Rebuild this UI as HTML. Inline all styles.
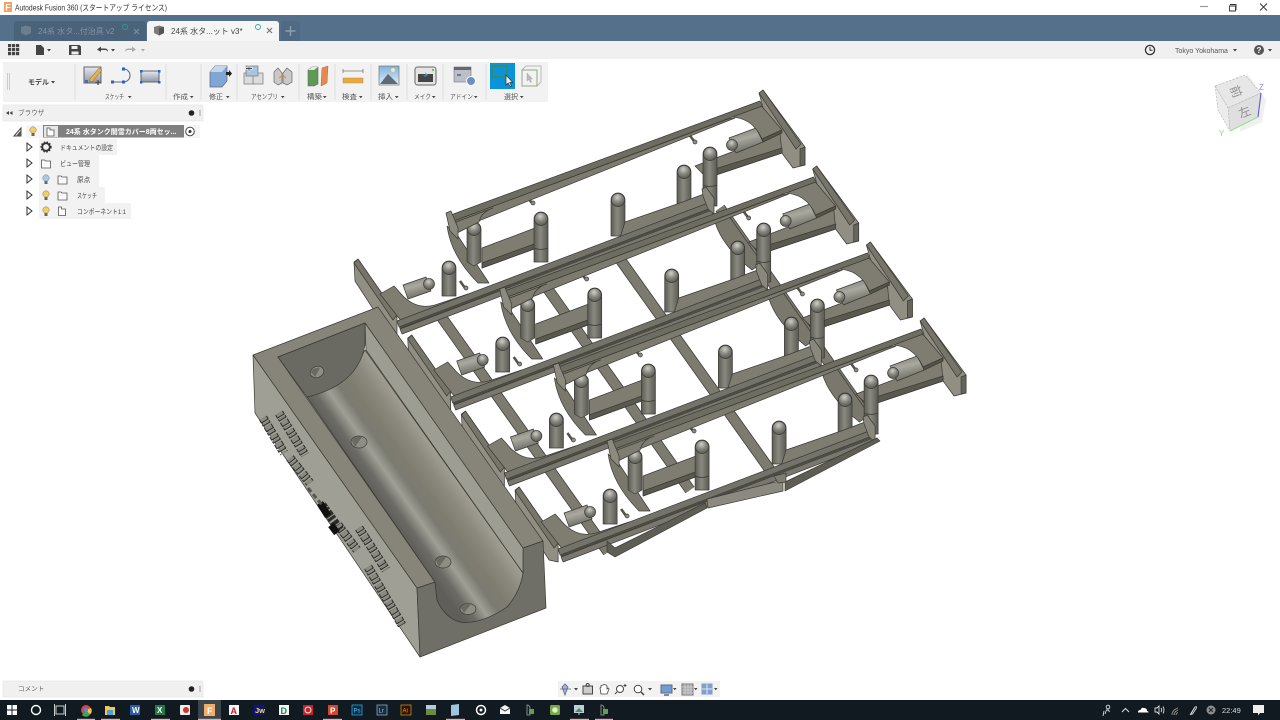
<!DOCTYPE html>
<html lang="ja"><head><meta charset="utf-8"><title>Autodesk Fusion 360</title>
<style>
html,body{margin:0;padding:0;background:#fff;width:1280px;height:720px;overflow:hidden}
svg{display:block;position:absolute;left:0;top:0;filter:blur(.3px)}
text{font-family:"Liberation Sans","Noto Sans CJK JP",sans-serif;fill:#444}
.r{font-size:6.6px;fill:#555}
.t{font-size:6.6px;fill:#444}
.e{stroke:#3b3a34;stroke-width:.7;stroke-linejoin:round}
</style></head><body>
<svg width="1280" height="720" viewBox="0 0 1280 720" xmlns="http://www.w3.org/2000/svg">
<defs>
<linearGradient id="pg" x1="0" x2="1" y1="0" y2="0"><stop offset="0" stop-color="#5c5c54"/><stop offset=".45" stop-color="#8b8a81"/><stop offset="1" stop-color="#5a5a52"/></linearGradient>
<radialGradient id="ball" cx=".45" cy=".3" r=".75"><stop offset="0" stop-color="#cfcec6"/><stop offset=".5" stop-color="#85857f"/><stop offset="1" stop-color="#53534c"/></radialGradient>
<linearGradient id="cg" x1="0" x2=".35" y1="0" y2="1"><stop offset="0" stop-color="#75746b"/><stop offset=".5" stop-color="#aaa9a0"/><stop offset="1" stop-color="#6c6c64"/></linearGradient>
<linearGradient id="tg" gradientUnits="userSpaceOnUse" x1="385" y1="510" x2="446" y2="467">
<stop offset="0" stop-color="#5f5e58"/><stop offset=".14" stop-color="#6c6b65"/><stop offset=".3" stop-color="#a09f96"/><stop offset=".45" stop-color="#7c7b72"/><stop offset=".62" stop-color="#7f7c70"/><stop offset=".82" stop-color="#8c8a7e"/><stop offset="1" stop-color="#9f9d92"/></linearGradient>
<linearGradient id="ico" x1="0" x2="0" y1="0" y2="1"><stop offset="0" stop-color="#e6e9ee"/><stop offset="1" stop-color="#8b97a6"/></linearGradient>
<linearGradient id="sky" x1="0" x2="0" y1="0" y2="1"><stop offset="0" stop-color="#7fb2dd"/><stop offset="1" stop-color="#e3eef6"/></linearGradient>

<path id="rc" class="e" fill="#7a786d" d="M715,222Q722,246 752,270L762,263L729,216Z"/>

<g id="unit">
 <!-- left curved member -->
 <path class="e" fill="#7a786d" d="M447,226Q451,256 478,283L489,283L458,236Z"/>
 <!-- right end plate -->
 <path class="e" fill="#918f84" d="M759,93L763,90L805,147V165L793,168L776,145L766,118Z"/>
 <path class="e" fill="#66655c" d="M800,149L805,147V165L800,166Z"/>
 <path class="e" fill="#77756a" d="M759,93L763,90L801,144L796,149Z"/>
 <!-- lower right bar -->
 <path class="e" fill="#7f7d71" d="M695,166L737,150L780,133L782,153L707,178Z"/>
 <path class="e" fill="#5a594f" d="M702,173L782,148V153L707,178Z"/>
 <!-- right cylinder -->
 <path class="e" fill="url(#cg)" d="M729,138L756,128L763,142L736,153Z"/>
 <circle class="e" cx="732" cy="145" r="5.5" fill="url(#ball)"/>
 <!-- lug plate right -->
 <path class="e" fill="#7f7d71" d="M727,117L759,103L782,130L762,139Q752,116 727,117Z"/>
 <path class="e" fill="#55544b" d="M762,139L782,130V133L763,142Z"/>
 <!-- left lower bar -->
 <path class="e" fill="#7f7d71" d="M482,248L535,228L537,248L482,268Z"/>
 <path class="e" fill="#5a594f" d="M482,263L537,243V248L482,268Z"/>
 <!-- nubs -->
 <path d="M527,197L532,203" stroke="#55544c" stroke-width="2.6"/><circle class="e" cx="533" cy="203" r="2" fill="#8f8e85"/>
 <path d="M688,133L694,141" stroke="#55544c" stroke-width="2.6"/><circle class="e" cx="695" cy="142" r="2" fill="#8f8e85"/>
 <path d="M460,281L465,288" stroke="#55544c" stroke-width="2.6"/><circle class="e" cx="466" cy="288" r="2" fill="#8f8e85"/>
 <!-- pins -->
 <g class="e">
 <path fill="url(#pg)" d="M467,229A7,7 0 0 1 481,229V262L474,266L467,262Z"/><circle cx="474" cy="229" r="6.6" fill="url(#ball)"/>
 <path fill="url(#pg)" d="M534,219A7,7 0 0 1 548,219V262H534Z"/><circle cx="541" cy="219" r="6.6" fill="url(#ball)"/><path d="M534,248Q541,251 548,248" fill="none"/>
 <path fill="url(#pg)" d="M611,200A7,7 0 0 1 625,200V236H611Z"/><circle cx="618" cy="200" r="6.6" fill="url(#ball)"/>
 <path fill="url(#pg)" d="M677,172A7,7 0 0 1 691,172V204H677Z"/><circle cx="684" cy="172" r="6.6" fill="url(#ball)"/>
 <path fill="url(#pg)" d="M703,154A7,7 0 0 1 717,154V206H703Z"/><circle cx="710" cy="154" r="6.6" fill="url(#ball)"/><path d="M703,185Q710,188 717,185" fill="none"/>
 </g>
 <!-- mid bar to right pins -->
 <path class="e" fill="#7f7d71" d="M625,222L680,203L704,194L706,204L640,230L620,238Z"/>
 <!-- top rail -->
 <path class="e" fill="#6e6d62" d="M448,216L760,101L762,106L451,222Z"/>
 <path class="e" fill="#7d7b70" d="M451,222L728,119L735,118L456,230Z"/>
 <!-- left top lug -->
 <path class="e" fill="#7f7d71" d="M456,222L493,208Q481,212 479,222L457,233Z"/>
 <path class="e" fill="#8d8b80" d="M446,213L451,211L458,228V239L450,231Z"/>
 <!-- lower left end plate -->
 <path class="e" fill="#918f84" d="M354,262L358,259L397,315V334L388,332L355,281Z"/>
 <path class="e" fill="#77756a" d="M358,259L397,315L393,320L354,263Z"/>
 <!-- lower left lug -->
 <path class="e" fill="#7f7d71" d="M380,294L394,286L403,296Q417,310 435,305L468,294L402,322Z"/>
 <path class="e" fill="url(#cg)" d="M403,285L426,277L431,291L408,299Z"/>
 <circle class="e" cx="429" cy="284" r="5.5" fill="url(#ball)"/>
 <path class="e" fill="url(#pg)" d="M442,268A7,7 0 0 1 456,268V296H442Z"/><circle class="e" cx="449" cy="268" r="6.6" fill="url(#ball)"/>
 <!-- lower rail -->
 <path class="e" fill="#74736a" d="M397,321L708,203L711,208L399,327Z"/>
 <path fill="#4d4c44" d="M399,327L711,208V210L400,329Z"/>
 <path class="e" fill="#7a786e" d="M400,329L712,210L713,215L402,334Z"/>
 <!-- right block -->
 <path class="e" fill="#8a887d" d="M702,189L706,187L714,198V214L708,209L703,196Z"/>
</g>
</defs>

<rect width="1280" height="720" fill="#fff"/>

<!-- transverse rails -->
<g fill="none" stroke-linecap="butt">
 <g stroke="#3f3e37" stroke-width="11"><path d="M440,315L608,552"/><path d="M545,285L690,490"/><path d="M617,255L770,470"/><path d="M720,208L873,425"/></g>
 <g stroke="#7d7b70" stroke-width="9.4"><path d="M440,315L608,552"/><path d="M545,285L690,490"/><path d="M617,255L770,470"/><path d="M720,208L873,425"/></g>
</g>
<use href="#rc"/>
<use href="#rc" x="53.7" y="76"/>
<use href="#rc" x="107.4" y="152"/>

<use href="#unit"/>
<use href="#unit" x="53.7" y="76"/>
<use href="#unit" x="107.4" y="152"/>
<use href="#unit" x="161.1" y="228"/>

<!-- bottom wedges -->
<path class="e" fill="#5f5e55" d="M615,548L705,503L707,508L615,557L607,552V541Z"/>
<path class="e" fill="#8c8a80" d="M707,499L783,480V491L708,508Z"/>
<path class="e" fill="#7f7d72" d="M774,476L786,473L786,482L778,483Z"/>
<path class="e" fill="#5f5e55" d="M785,482L877,438L880,441L785,491Z"/>

<!-- tank -->
<path class="e" fill="#a09f95" d="M253,355L417,588L420,657L255,413Z"/>
<path class="e" fill="#6f6f67" d="M417,588L435,582L437,600Q445,618 460,622Q480,625 507,607Q520,592 523,573V548L543,541L546,608L420,657Z"/>
<path class="e" fill="#87847a" d="M253,355L378,307L543,541L523,548L365,323L278,357L435,582L417,588Z"/>
<path class="e" fill="url(#tg)" d="M307,397Q345,388 365,350L523,573Q520,592 507,607Q480,625 460,622Q445,618 437,600L435,582Z"/>
<path class="e" fill="#9e9d93" d="M365,323L523,548V573L366,350Z"/>
<path class="e" fill="#6a6a62" d="M278,357L365,323V345Q358,385 307,397Z"/>
<g class="e" fill="#8f8e84"><ellipse cx="317" cy="372" rx="7" ry="5.5" transform="rotate(-20 317 372)"/><ellipse cx="359" cy="442" rx="8" ry="6"/><ellipse cx="443" cy="562" rx="8" ry="6"/><ellipse cx="468" cy="609" rx="8" ry="5.5"/></g>
<g fill="#6a6a62"><path d="M311,372a7,5 0 0 1 9,-4l-5,9z"/><path d="M352,441a7,5 0 0 1 10,-4l-7,10z"/><path d="M436,561a7,5 0 0 1 10,-4l-7,10z"/><path d="M461,608a7,5 0 0 1 10,-4l-7,9z"/></g>

<!-- embossed text on tank side -->
<g fill="none">
 <g stroke="#2c2c28" stroke-width="9" stroke-dasharray="4 1 2.500 1.500 5 1 3 2"><path d="M263,418L284,453"/><path d="M279,413L305,455"/><path d="M290,458L310,483"/><path d="M322,505L340,530"/><path d="M338,525L357,550"/><path d="M359,528L386,570"/><path d="M368,567L402,625"/></g>
 <g stroke="#8a8a83" stroke-width="7" stroke-dasharray="3 2 1.500 2.500 4 2 2 3"><path d="M263,418L284,453"/><path d="M279,413L305,455"/><path d="M290,458L310,483"/><path d="M338,525L357,550"/><path d="M359,528L386,570"/><path d="M368,567L402,625"/></g>
 <path stroke="#111110" stroke-width="7" d="M320,503L328,516M331,525L337,533"/>
 <path stroke="#555" stroke-width="3" stroke-dasharray="5 3" d="M308,488L322,505"/>
</g>

<!-- title bar -->
<rect width="1280" height="15" fill="#fff"/>
<rect x="4" y="2" width="8" height="10" fill="#f3a15a"/><text x="5.2" y="10.5" style="font-size:9px;font-weight:bold;fill:#fff">F</text>
<text x="15" y="10.5" textLength="152" lengthAdjust="spacingAndGlyphs" style="font-size:8.2px;fill:#333">Autodesk Fusion 360 (スタートアップ ライセンス)</text>
<path d="M1200,6.5H1208" stroke="#999" stroke-width="1.2"/>
<path d="M1230,4.5h6v5h-1M1229.500,6h6v5h-6z" fill="none" stroke="#333" stroke-width=".9"/>
<path d="M1260,3.500l7,7m0,-7l-7,7" stroke="#333" stroke-width=".9"/>

<!-- tabs -->
<rect y="15" width="1280" height="26" fill="#54708a"/>
<path d="M14,41V24a3,3 0 0 1 3,-3H143a3,3 0 0 1 3,3V41Z" fill="#4a6379"/>
<path d="M147,41V24a3,3 0 0 1 3,-3H276a3,3 0 0 1 3,3V41Z" fill="#f5f5f5"/>
<path d="M281,41V24a3,3 0 0 1 3,-3H297a3,3 0 0 1 3,3V41Z" fill="#4f6a82"/>
<path d="M290.500,26v10M285.500,31h10" stroke="#8ba0b3" stroke-width="1.4"/>
<path d="M21,27l5,-1.500l5,1.500v6l-5,2.500l-5,-2.500z" fill="#6b7f90"/>
<text x="38" y="34" style="font-size:8px;fill:#8295a6">24系  水タ...付治具 v2</text>
<circle cx="125" cy="27" r="2.500" fill="none" stroke="#2f9c94" stroke-width=".9"/>
<path d="M134,29l5,5m0,-5l-5,5" stroke="#7d90a2" stroke-width="1.2"/>
<path d="M154,27l5,-1.500l5,1.500v6l-5,2.500l-5,-2.500z" fill="#7c7c78"/><path d="M159,28v7.500l5,-2.500v-6z" fill="#55554f"/>
<text x="171" y="34" style="font-size:8px;fill:#444">24系  水タ...ット v3*</text>
<circle cx="258" cy="27" r="2.500" fill="none" stroke="#38a79d" stroke-width=".9"/>
<path d="M267,28l5,5m0,-5l-5,5" stroke="#777" stroke-width="1.2"/>

<!-- quick access bar -->
<rect y="41" width="1280" height="18" fill="#f0f0f0"/>
<g fill="#444"><rect x="8" y="44" width="3.200" height="3.200"/><rect x="12" y="44" width="3.200" height="3.200"/><rect x="16" y="44" width="3.200" height="3.200"/><rect x="8" y="48" width="3.200" height="3.200"/><rect x="12" y="48" width="3.200" height="3.200"/><rect x="16" y="48" width="3.200" height="3.200"/><rect x="8" y="52" width="3.200" height="3.200"/><rect x="12" y="52" width="3.200" height="3.200"/><rect x="16" y="52" width="3.200" height="3.200"/>
<path d="M36,45h5l3,3v7h-8z"/><path d="M47,49h4l-2,2.500z"/>
<path fill-rule="evenodd" d="M69,45h10.500l1.500,1.500v8.500h-12zM71.500,46v3h6v-3zM71.500,51.500v3h7v-3z"/>
<path d="M97,49.500l4,-3v2h4q3,0 3,3.500q-1,-2 -3,-2h-4v2z"/><path d="M111,49h4l-2,2.500z"/></g>
<g fill="#aaa"><path d="M136,49.500l-4,-3v2h-4q-3,0 -3,3.500q1,-2 3,-2h4v2z"/><path d="M141,49h4l-2,2.500z"/></g>
<circle cx="1150" cy="50" r="4.600" fill="none" stroke="#333" stroke-width="1.300"/><path d="M1150,47v3.200h2.500" fill="none" stroke="#333"/>
<text x="1175" y="53" style="font-size:7px;fill:#555">Tokyo Yokohama</text><path d="M1233,49h4l-2,2.500z" fill="#444"/>
<circle cx="1259" cy="50" r="5" fill="#555"/><text x="1259" y="53" style="font-size:8px;font-weight:bold;fill:#fff;text-anchor:middle">?</text><path d="M1268,49h4l-2,2.500z" fill="#444"/>

<!-- ribbon -->
<rect x="3" y="62" width="545" height="40" fill="#f2f2f2"/>
<path d="M7.500,73v17M9.500,73v17" stroke="#ccc"/>
<text x="28" y="84.500" style="font-size:7px;font-weight:bold;fill:#444">モデル</text><path d="M51,81h4l-2,2.500z" fill="#444"/>
<g stroke="#ddd" stroke-width="1"><path d="M75,64v36M166,64v36M201,64v36M237,64v36M299,64v36M335,64v36M371,64v36M407,64v36M443,64v36M486,64v36"/></g>
<!-- sketch icons -->
<rect x="84" y="67" width="17" height="16" fill="url(#ico)" stroke="#666" stroke-width="1"/><path d="M90,79l9,-11l3,2l-9,11l-3,1z" fill="#e9b04a" stroke="#8a6a20" stroke-width=".5"/><rect x="85" y="80" width="3" height="3" fill="#3a6fc4"/><path d="M98,80v5M95.500,82.500h5" stroke="#555" stroke-width="1.400"/>
<path d="M113,82H123.500A6.500,6.500 0 0 0 123.500,69" fill="none" stroke="#667" stroke-width="1.100"/><rect x="122" y="67.500" width="3" height="3" fill="#2a62c8"/><rect x="111" y="80.500" width="3" height="3" fill="#2a62c8"/><rect x="122" y="80.500" width="3" height="3" fill="#2a62c8"/>
<rect x="141" y="71" width="18" height="11" fill="url(#ico)" stroke="#666"/><g fill="#2a62c8"><rect x="140" y="70" width="2.500" height="2.500"/><rect x="158" y="70" width="2.500" height="2.500"/><rect x="140" y="81" width="2.500" height="2.500"/><rect x="158" y="81" width="2.500" height="2.500"/></g>
<!-- modify -->
<path d="M210,72l5,-6h12v15l-5,6h-12z" fill="#7fa6d6" stroke="#667" stroke-width=".7"/><path d="M215,66h12l-5,6h-12z" fill="#c5d6ea"/><path d="M226,72h3v-2l3,3.500l-3,3.500v-2h-3z" fill="#222"/>
<!-- assembly -->
<rect x="244" y="73" width="10" height="11" fill="#dcdcdc" stroke="#777" stroke-width=".7"/><rect x="253" y="73" width="10" height="11" fill="#dcdcdc" stroke="#777" stroke-width=".7"/><rect x="246" y="66" width="12" height="10" fill="#a9c3e2" stroke="#777" stroke-width=".7"/><path d="M249,65v7M245.500,68.500h7" stroke="#fff" stroke-width="2"/><path d="M249,65.500v6M246,68.500h6" stroke="#444" stroke-width=".9"/>
<path d="M274,72l4,-4l4,5v10l-4,2l-4,-3zM283,73l4,-5l5,4v10l-5,3l-4,-2z" fill="#c9c9c9" stroke="#666" stroke-width=".7"/><path d="M279,78l4,-3l3,3" stroke="#e08a28" fill="none"/>
<!-- construct -->
<path d="M308,70l4,-3h6v17l-4,2h-6z" fill="#5d9b52" stroke="#667" stroke-width=".6"/><path d="M308,70l4,-3h6l-4,3z" fill="#e6e6e6"/><path d="M322,68l6,-2l-1,17l-6,3z" fill="#e68a4e" stroke="#a65" stroke-width=".5"/>
<!-- inspect -->
<path d="M343,71h20M343,69v4M363,69v4" stroke="#777" stroke-width=".8" fill="none"/><rect x="343" y="78" width="20" height="5" fill="#e9ac3b" stroke="#a77" stroke-width=".4"/>
<!-- insert -->
<rect x="379" y="66" width="20" height="19" fill="url(#sky)" stroke="#777" stroke-width=".7"/><path d="M380,84l8,-10l10,10z" fill="#5c6b74"/><circle cx="393" cy="70" r="2" fill="#f6e9a5"/>
<!-- make -->
<rect x="415" y="67" width="21" height="18" rx="2.500" fill="#e4e4e4" stroke="#666"/><rect x="418" y="74" width="15" height="8" fill="#444"/><path d="M425.500,72v5l-2.500,-1.500h5z" fill="#5aa7dc"/><circle cx="433" cy="70" r="1" fill="#4fb04f"/>
<!-- addins -->
<rect x="454" y="67" width="17" height="15" fill="#b9c0c8" stroke="#777" stroke-width=".6"/><rect x="454" y="67" width="17" height="3" fill="#667"/><path d="M457,75h4" stroke="#333"/><circle cx="471" cy="81" r="4.500" fill="#6d8fc2" stroke="#fff"/>
<!-- select -->
<rect x="490" y="63" width="25" height="26" fill="#0a93d8"/><rect x="492" y="66" width="15" height="11" fill="none" stroke="#3f8c3d" stroke-width="1.300"/><path d="M506,75v10l2.200,-2l1.800,3.500l1.500,-.7l-1.800,-3.400h3z" fill="#eee" stroke="#222" stroke-width=".6"/>
<path d="M522,70l4,-4h15v16l-4,4h-15z" fill="#f2f2f2" stroke="#bbb"/><rect x="522" y="70" width="15" height="16" fill="none" stroke="#8fa984" stroke-width="1"/><path d="M527,73v8l2,-1.500l1.500,3l1,-.5l-1.500,-3h2.500z" fill="#bbb" stroke="#999" stroke-width=".4"/>
<!-- ribbon labels -->
<g fill="#444">
<text class="r" x="105" y="99" textLength="19" lengthAdjust="spacingAndGlyphs">スケッチ</text><path d="M128,96h3.500l-1.750,2.200z"/>
<text class="r" x="173" y="99" textLength="15" lengthAdjust="spacingAndGlyphs">作成</text><path d="M190,96h3.500l-1.750,2.200z"/>
<text class="r" x="209" y="99" textLength="14" lengthAdjust="spacingAndGlyphs">修正</text><path d="M226,96h3.500l-1.750,2.200z"/>
<text class="r" x="251" y="99" textLength="27" lengthAdjust="spacingAndGlyphs">アセンブリ</text><path d="M281,96h3.500l-1.750,2.200z"/>
<text class="r" x="307" y="99" textLength="15" lengthAdjust="spacingAndGlyphs">構築</text><path d="M323,96h3.500l-1.750,2.200z"/>
<text class="r" x="342" y="99" textLength="15" lengthAdjust="spacingAndGlyphs">検査</text><path d="M359,96h3.500l-1.750,2.200z"/>
<text class="r" x="378" y="99" textLength="15" lengthAdjust="spacingAndGlyphs">挿入</text><path d="M395,96h3.500l-1.750,2.200z"/>
<text class="r" x="414" y="99" textLength="17" lengthAdjust="spacingAndGlyphs">メイク</text><path d="M432,96h3.500l-1.750,2.200z"/>
<text class="r" x="450" y="99" textLength="23" lengthAdjust="spacingAndGlyphs">アドイン</text><path d="M474,96h3.500l-1.750,2.200z"/>
<text class="r" x="504" y="99" textLength="14" lengthAdjust="spacingAndGlyphs">選択</text><path d="M520,96h3.500l-1.750,2.200z"/>
</g>

<!-- browser -->
<rect x="3" y="105" width="200" height="16" fill="#f0f0f0" stroke="#e2e2e2" stroke-width=".6"/>
<path d="M6,113l3,-2v4zM9.500,113l3,-2v4z" fill="#444"/>
<text x="18" y="115" class="t" style="fill:#666">ブラウザ</text>
<circle cx="191.500" cy="113" r="2.800" fill="#222"/><path d="M200,110v6" stroke="#bbb" stroke-width="1.500"/>
<path d="M14,136l7,-8v8z" fill="none" stroke="#444" stroke-width="1"/><path d="M16,136l5,-6v6z" fill="#555"/>
<rect x="26" y="125" width="174" height="13" fill="#f5f5f5"/>
<rect x="43" y="125" width="141" height="12.500" fill="#808080"/>
<rect x="44" y="126" width="14" height="11" fill="#e7e7e7"/>
<path d="M47,128h3v2h4v6h-7z" fill="#fff" stroke="#555" stroke-width=".8"/>
<text x="66" y="134" style="font-size:7px;font-weight:bold;fill:#fff">24系  水タンク開雪カバー8両セッ...</text>
<circle cx="190" cy="131.500" r="4.300" fill="#fff" stroke="#333" stroke-width=".9"/><circle cx="190" cy="131.500" r="1.500" fill="#333"/>
<rect x="39" y="139" width="78" height="16" fill="#f2f2f2"/>
<rect x="39" y="155" width="60" height="16" fill="#f2f2f2"/>
<rect x="39" y="171" width="60" height="16" fill="#f2f2f2"/>
<rect x="39" y="187" width="66" height="16" fill="#f2f2f2"/>
<rect x="39" y="203" width="92" height="16" fill="#f2f2f2"/>
<g fill="#fff" stroke="#333" stroke-width="1"><path d="M27,143l5,4l-5,4z"/><path d="M27,159l5,4l-5,4z"/><path d="M27,175l5,4l-5,4z"/><path d="M27,191l5,4l-5,4z"/><path d="M27,207l5,4l-5,4z"/></g>
<!-- bulbs -->
<g stroke="#777" stroke-width=".5"><circle cx="33" cy="130" r="3.200" fill="#f2d05a"/><circle cx="46" cy="178" r="3.200" fill="#a9c8ee"/><circle cx="46" cy="194" r="3.200" fill="#f2d05a"/><circle cx="46" cy="210" r="3.200" fill="#f2d05a"/></g>
<g fill="#666"><rect x="31.500" y="133" width="3" height="3"/><rect x="44.500" y="181" width="3" height="3"/><rect x="44.500" y="197" width="3" height="3"/><rect x="44.500" y="213" width="3" height="3"/></g>
<!-- gear, folders -->
<circle cx="46" cy="147" r="3.800" fill="none" stroke="#333" stroke-width="1.800"/><circle cx="46" cy="147" r="5" fill="none" stroke="#333" stroke-width="1.300" stroke-dasharray="1.500 1.500"/>
<g fill="#fafafa" stroke="#555" stroke-width=".8"><path d="M41.500,160h3l1,1h5v7h-9z"/><path d="M58,176h3l1,1h5v7h-9z"/><path d="M58,192h3l1,1h5v7h-9z"/><path d="M58.500,207h3v2h4v6.500h-7z"/></g>
<text x="60" y="150" class="t" textLength="53" lengthAdjust="spacingAndGlyphs">ドキュメントの設定</text><text x="60" y="166" class="t" textLength="30" lengthAdjust="spacingAndGlyphs">ビュー管理</text><text x="77" y="182" class="t">原点</text><text x="77" y="198" class="t" textLength="20" lengthAdjust="spacingAndGlyphs">スケッチ</text><text x="77" y="214" class="t" textLength="49" lengthAdjust="spacingAndGlyphs">コンポーネント1:1</text>

<!-- comments -->
<rect x="3" y="681" width="200" height="16" fill="#f0f0f0" stroke="#e2e2e2" stroke-width=".6"/>
<text x="18" y="691" class="t" style="fill:#666">コメント</text><circle cx="191.500" cy="689" r="2.800" fill="#222"/><path d="M200,686v6" stroke="#bbb" stroke-width="1.500"/>

<!-- nav bar -->
<rect x="558" y="681" width="162" height="16" fill="#f2f2f2"/>
<path d="M565,684l3,3l-3,8l-3,-8zM560,689h11" fill="#9fb6d6" stroke="#667" stroke-width=".8"/><path d="M574,688h4l-2,2.500z" fill="#444"/>
<rect x="583" y="686" width="9.500" height="8" fill="#ccc" stroke="#444"/><circle cx="587.700" cy="685" r="1.500" fill="none" stroke="#444"/>
<path d="M601,694l-1,-6l1,-.5v-2l2,-.5l1,-.5l2,.5l1,1v3l1,-1l1,1l-2,5z" fill="#fff" stroke="#444" stroke-width=".8"/>
<circle cx="620" cy="689" r="3.500" fill="#fff" stroke="#444"/><path d="M617,692l-2,2M625,684v3M623.500,685.500h3" stroke="#444"/>
<circle cx="638" cy="689" r="3.800" fill="#fff" stroke="#444"/><path d="M641,692l3,3" stroke="#444" stroke-width="1.500"/><path d="M648,688h4l-2,2.500z" fill="#444"/>
<rect x="661" y="685" width="11" height="8" fill="#6e9ed6" stroke="#667"/><path d="M664,695h5" stroke="#667" stroke-width="1.500"/><path d="M673,688h3.500l-1.750,2.200z" fill="#444"/>
<rect x="682" y="684" width="11" height="11" fill="#aaa" stroke="#777"/><path d="M682,687h11M682,690h11M682,693h11M685,684v11M688,684v11M691,684v11" stroke="#ddd" stroke-width=".6"/><path d="M694,688h3.500l-1.750,2.200z" fill="#444"/>
<rect x="702" y="684" width="10" height="10" fill="#7aa2d8" stroke="#8a9ab0"/><path d="M707,684v10M702,689h10" stroke="#e5e5e5"/><path d="M714,688h3.500l-1.750,2.200z" fill="#444"/>

<!-- nav cube -->
<path d="M1247,73L1266,100L1262,122L1240,132Z" fill="#d5d5d5" opacity=".35"/>
<path d="M1215,86L1245,75L1261,93L1228,108Z" fill="#e7e7e7" stroke="#bbb" stroke-width=".7" stroke-dasharray="2.500 1.200"/>
<path d="M1228,108L1261,93L1258,117L1230,131Z" fill="#dfdfdf" stroke="#bbb" stroke-width=".7" stroke-dasharray="2.500 1.200"/>
<path d="M1215,86L1228,108L1230,131L1218,110Z" fill="#ececec" stroke="#bbb" stroke-width=".7" stroke-dasharray="2 1.400"/>
<text transform="translate(1235,92) rotate(68)" style="font-size:12px;fill:#8e8e8e;text-anchor:middle;dominant-baseline:middle">前</text>
<text transform="translate(1245,113) rotate(-22)" style="font-size:12px;fill:#8e8e8e;text-anchor:middle;dominant-baseline:middle">左</text>
<path d="M1258,117L1261,93" stroke="#5a5fd6" stroke-width="1.100"/><path d="M1258,117L1230,131" stroke="#8ee88e" stroke-width="1.100"/>
<text x="1259" y="90" style="font-size:8px;fill:#8d90e6">Z</text><text x="1219" y="136" style="font-size:8px;fill:#86dc86">Y</text>

<!-- taskbar -->
<rect y="700" width="1280" height="20" fill="#111a20"/>
<rect x="198" y="700" width="23" height="20" fill="#3a454c"/>
<g fill="#fff"><rect x="7" y="705" width="4.500" height="4.500"/><rect x="12.500" y="705" width="4.500" height="4.500"/><rect x="7" y="710.500" width="4.500" height="4.500"/><rect x="12.500" y="710.500" width="4.500" height="4.500"/></g>
<circle cx="36" cy="710" r="4.500" fill="none" stroke="#fff" stroke-width="1.400"/>
<path d="M56,706h8v8h-8zM54.500,704v12M65.500,704v12" fill="none" stroke="#ccc" stroke-width="1"/>
<circle cx="86" cy="710" r="5" fill="#d9453a"/><path d="M86,710L82,715a5,5 0 0 0 8,-.5z" fill="#3ba55c"/><path d="M86,710l5,-2a5,5 0 0 1 -1,6.500z" fill="#f5c542"/><circle cx="86" cy="710" r="2" fill="#4a8af0"/>
<path d="M105,706h4l1,1h5v8h-10z" fill="#f2c94c"/><rect x="107" y="710" width="6" height="5" fill="#4aa3df"/>
<rect x="130" y="705" width="10" height="10" fill="#2b5ea8"/><text x="132" y="713" style="font-size:8px;font-weight:bold;fill:#fff">W</text>
<rect x="155" y="705" width="10" height="10" fill="#1f7a45"/><text x="157" y="713" style="font-size:8px;font-weight:bold;fill:#fff">X</text>
<rect x="180" y="705" width="10" height="10" rx="1" fill="#eee"/><circle cx="186" cy="710" r="3" fill="#d0332b"/>
<rect x="204" y="704" width="11" height="12" fill="#f0ad6b"/><text x="207" y="714" style="font-size:9px;font-weight:bold;fill:#fff">F</text>
<rect x="229" y="705" width="10" height="10" fill="#f5f5f5"/><text x="230.500" y="714" style="font-size:9px;font-weight:bold;fill:#c8202a">A</text>
<rect x="254" y="705" width="10" height="10" fill="#11118c"/><text x="255" y="713" style="font-size:7.500px;font-weight:bold;fill:#f4e04a">Jw</text>
<rect x="279" y="705" width="10" height="10" fill="#f5f5f5"/><text x="280.500" y="714" style="font-size:9px;font-weight:bold;fill:#1c8a4a">D</text>
<rect x="303" y="705" width="10" height="10" fill="#c8202a"/><circle cx="308" cy="710" r="3" fill="none" stroke="#eee"/>
<rect x="328" y="705" width="10" height="10" fill="#d2462a"/><text x="330" y="713.500" style="font-size:8px;font-weight:bold;fill:#fff">P</text>
<rect x="352" y="705" width="10" height="10" fill="#0b2c40" stroke="#2aa7e0" stroke-width=".8"/><text x="353.500" y="712.500" style="font-size:6px;fill:#4fc3f7">Ps</text>
<rect x="377" y="705" width="10" height="10" fill="#1a2c3a" stroke="#7fa9c8" stroke-width=".8"/><text x="378.500" y="712.500" style="font-size:6px;fill:#a5c8e0">Lr</text>
<rect x="401" y="705" width="10" height="10" fill="#2a1505" stroke="#d9801e" stroke-width=".8"/><text x="402.500" y="712.500" style="font-size:6px;fill:#f09a2e">Ai</text>
<rect x="426" y="705" width="10" height="10" fill="#6e8a3c"/><rect x="426" y="705" width="10" height="4" fill="#b5cce0"/>
<path d="M451,705l8,-1v11l-8,1z" fill="#9fc5dc"/>
<circle cx="481" cy="710" r="4.500" fill="none" stroke="#fff" stroke-width="1.500"/><circle cx="481" cy="710" r="1.500" fill="#fff"/>
<path d="M500,708l5,-3l5,3v6h-10z" fill="#f5f5f5"/><path d="M500,708l5,3l5,-3" fill="none" stroke="#222" stroke-width=".8"/>
<path d="M527,705a3,3 0 0 1 3,3v7h-3z" fill="none" stroke="#888"/><rect x="529" y="709" width="5" height="5" fill="#5da34a"/>
<rect x="550" y="705" width="10" height="10" rx="1.500" fill="#76a742"/><circle cx="555" cy="710" r="2.800" fill="#dfe9c9"/>
<rect x="574" y="705" width="10" height="8" fill="#bcd0dc"/><path d="M575,712l4,-4l4,4z" fill="#4f8d59"/><path d="M579,713v2" stroke="#ccc"/>
<path d="M601,705a3,3 0 0 1 3,3v7h-3z" fill="none" stroke="#888"/><rect x="603" y="709" width="5" height="5" fill="#5da34a"/>
<g fill="#f0a4ab"><rect x="77" y="718.800" width="18" height="1.200"/><rect x="101" y="718.800" width="19" height="1.200"/><rect x="151" y="718.800" width="19" height="1.200"/><rect x="198" y="718.800" width="23" height="1.200"/><rect x="323" y="718.800" width="19" height="1.200"/><rect x="446" y="718.800" width="19" height="1.200"/><rect x="570" y="718.800" width="19" height="1.200"/><rect x="595" y="718.800" width="18" height="1.200"/></g>
<!-- tray -->
<g fill="none" stroke="#ddd" stroke-width=".9"><circle cx="1108" cy="707" r="1.800"/><path d="M1105,714l1.500,-4h2l1,2M1103,716l1,-5"/><path d="M1122,712l3.500,-3.500l3.500,3.500" stroke-width="1"/><path d="M1155,708h2l2,-2v8l-2,-2h-2zM1161,708q1.500,2 0,4M1163,706.500q2,3.500 0,7"/><path d="M1172,715q0,-5 6,-7M1174,715q0,-3 4,-5M1176,715q0,-1.500 2,-2.500" stroke="#999"/><path d="M1190,715l5,-8q2,-1 1.500,1l-4,6q-1.500,1 -1,-1l3,-5"/></g>
<path d="M1138,712q0,-2 2.500,-2q1,-3 3.500,-2q3,0 3,3q1.500,0 1.500,1.500h-10.500z" fill="#fff"/>
<circle cx="1211" cy="710" r="4.500" fill="#8a8f93"/><path d="M1209,708l4,4m0,-4l-4,4" stroke="#222" stroke-width="1"/>
<text x="1222" y="713" style="font-size:7.500px;fill:#ddd">22:49</text>
<path d="M1253,705h11v8h-4l-2,2.500v-2.500h-5z" fill="#eee"/>
</svg>
</body></html>
